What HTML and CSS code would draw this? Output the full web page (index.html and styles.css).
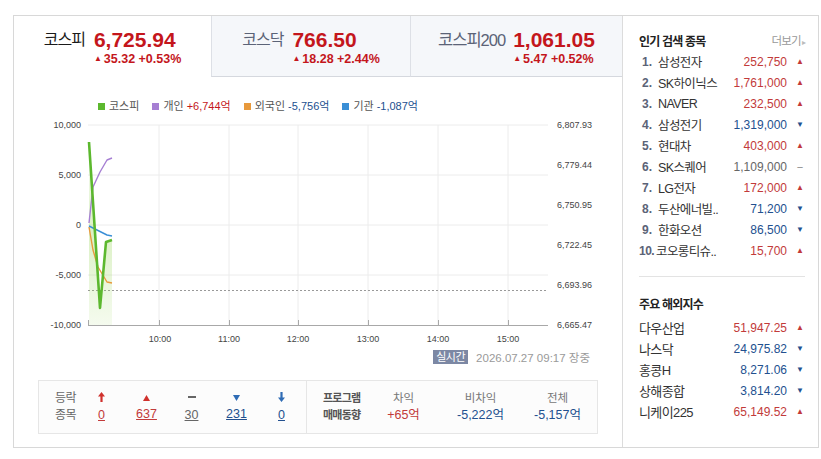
FILE: index.html
```html
<!DOCTYPE html>
<html lang="ko">
<head>
    <meta charset="UTF-8">
    <title>국내 증시</title>
    <meta name="viewport" content="width=device-width">
    <link rel="stylesheet" href="styles.css">
</head>
<body>
<div class="board">
    <main class="market">
        <ul class="tabs">
            <li class="tab on">
                <span class="name">코스피</span>
                <span class="quote"><strong>6,725.94</strong><em><i>▲</i>35.32 +0.53%</em></span>
            </li>
            <li class="tab">
                <span class="name">코스닥</span>
                <span class="quote"><strong>766.50</strong><em><i>▲</i>18.28 +2.44%</em></span>
            </li>
            <li class="tab">
                <span class="name">코스피200</span>
                <span class="quote"><strong>1,061.05</strong><em><i>▲</i>5.47 +0.52%</em></span>
            </li>
        </ul>

        <ul class="legend">
            <li><b class="dot green"></b>코스피</li>
            <li><b class="dot purple"></b>개인 <span class="up">+6,744억</span></li>
            <li><b class="dot orange"></b>외국인 <span class="down">-5,756억</span></li>
            <li><b class="dot blue"></b>기관 <span class="down">-1,087억</span></li>
        </ul>

        <!-- 투자자별 순매수(왼쪽 축) / 지수(오른쪽 축) -->
        <svg class="chart" width="608" height="230" viewBox="14 115 608 230">
            <defs>
                <linearGradient id="kospiFill" x1="0" y1="0" x2="0" y2="1">
                    <stop offset="0" stop-color="#9ad65a" stop-opacity="0.05"/>
                    <stop offset="0.5" stop-color="#9ad65a" stop-opacity="0.35"/>
                    <stop offset="1" stop-color="#9ad65a" stop-opacity="0.1"/>
                </linearGradient>
            </defs>
            <path class="grid" d="M88 125H548M88 175H548M88 225H548M88 275H548M159 125V325M229 125V325M298 125V325M368 125V325M438 125V325M508 125V325"/>
            <path class="axis" d="M88 325.5H548M88.5 320V325M159.5 320V325M229.5 320V325M298.5 320V325M368.5 320V325M438.5 320V325M508.5 320V325"/>
            <path class="base" d="M88 290.5H548"/>

            <polygon class="area" points="89,142 100,308 106,242 112,240 112,325 89,325"/>
            <polyline class="ln purple" points="89,223 93,187 100,172 107,160 112,158"/>
            <polyline class="ln orange" points="89,227 93,250 98,267 107,282 112,283"/>
            <polyline class="ln blue" points="89,226 97,230 107,235 112,236"/>
            <polyline class="ln green" points="89,142 100,308 106,242 112,240"/>

            <g class="yl">
                <text x="81" y="128">10,000</text>
                <text x="81" y="178">5,000</text>
                <text x="81" y="228">0</text>
                <text x="81" y="278">-5,000</text>
                <text x="81" y="328">-10,000</text>
            </g>
            <g class="yr">
                <text x="557" y="128">6,807.93</text>
                <text x="557" y="168">6,779.44</text>
                <text x="557" y="208">6,750.95</text>
                <text x="557" y="248">6,722.45</text>
                <text x="557" y="288">6,693.96</text>
                <text x="557" y="328">6,665.47</text>
            </g>
            <g class="xl">
                <text x="160" y="342">10:00</text>
                <text x="229" y="342">11:00</text>
                <text x="298" y="342">12:00</text>
                <text x="368" y="342">13:00</text>
                <text x="438" y="342">14:00</text>
                <text x="508" y="342">15:00</text>
            </g>
        </svg>

        <p class="stamp"><span class="live">실시간</span><span>2026.07.27 09:17 장중</span></p>

        <div class="summary">
            <div class="updown">
                <span class="head">등락<br>종목</span>
                <span class="col up">
                    <svg width="7" height="10" viewBox="0 0 7 10"><path d="M3.5 0L7 4.5H4.6V10H2.4V4.5H0Z"/></svg>
                    <a href="#">0</a>
                </span>
                <span class="col up">
                    <svg width="7" height="6" viewBox="0 0 7 6"><path d="M3.5 0L7 6H0Z"/></svg>
                    <a href="#">637</a>
                </span>
                <span class="col flat">
                    <svg width="8" height="2" viewBox="0 0 8 2"><rect width="8" height="2"/></svg>
                    <a href="#">30</a>
                </span>
                <span class="col down">
                    <svg width="7" height="6" viewBox="0 0 7 6"><path d="M0 0H7L3.5 6Z"/></svg>
                    <a href="#">231</a>
                </span>
                <span class="col down">
                    <svg width="7" height="10" viewBox="0 0 7 10"><path d="M2.4 0H4.6V5.5H7L3.5 10L0 5.5H2.4Z"/></svg>
                    <a href="#">0</a>
                </span>
            </div>
            <div class="program">
                <span class="head">프로그램<br>매매동향</span>
                <span class="col">차익<b class="up">+65억</b></span>
                <span class="col">비차익<b class="down">-5,222억</b></span>
                <span class="col">전체<b class="down">-5,157억</b></span>
            </div>
        </div>
    </main>

    <aside class="side">
        <h2>인기 검색 종목 <a href="#" class="more">더보기<i>▸</i></a></h2>
        <ol class="rank">
            <li><span class="no">1.</span><span class="nm">삼성전자</span><span class="pr up">252,750</span><i class="ar up">▲</i></li>
            <li><span class="no">2.</span><span class="nm">SK하이닉스</span><span class="pr up">1,761,000</span><i class="ar up">▲</i></li>
            <li><span class="no">3.</span><span class="nm">NAVER</span><span class="pr up">232,500</span><i class="ar up">▲</i></li>
            <li><span class="no">4.</span><span class="nm">삼성전기</span><span class="pr down">1,319,000</span><i class="ar down">▼</i></li>
            <li><span class="no">5.</span><span class="nm">현대차</span><span class="pr up">403,000</span><i class="ar up">▲</i></li>
            <li><span class="no">6.</span><span class="nm">SK스퀘어</span><span class="pr">1,109,000</span><i class="ar flat">−</i></li>
            <li><span class="no">7.</span><span class="nm">LG전자</span><span class="pr up">172,000</span><i class="ar up">▲</i></li>
            <li><span class="no">8.</span><span class="nm">두산에너빌..</span><span class="pr down">71,200</span><i class="ar down">▼</i></li>
            <li><span class="no">9.</span><span class="nm">한화오션</span><span class="pr down">86,500</span><i class="ar down">▼</i></li>
            <li><span class="no ten">10.</span><span class="nm">코오롱티슈..</span><span class="pr up">15,700</span><i class="ar up">▲</i></li>
        </ol>
        <div class="world">
            <h2>주요 해외지수</h2>
            <ul>
                <li><span class="nm">다우산업</span><span class="pr up">51,947.25</span><i class="ar up">▲</i></li>
                <li><span class="nm">나스닥</span><span class="pr down">24,975.82</span><i class="ar down">▼</i></li>
                <li><span class="nm">홍콩H</span><span class="pr down">8,271.06</span><i class="ar down">▼</i></li>
                <li><span class="nm">상해종합</span><span class="pr down">3,814.20</span><i class="ar down">▼</i></li>
                <li><span class="nm">니케이225</span><span class="pr up">65,149.52</span><i class="ar up">▲</i></li>
            </ul>
        </div>
    </aside>
</div>
</body>
</html>
```

FILE: styles.css
```css
* {
    box-sizing: border-box;
}
body {
    margin: 0;
    background: #fff;
    color: #333;
    font-family: "Liberation Sans", "Noto Sans CJK KR", sans-serif;
}
ul, ol, p, h2 {
    margin: 0;
    padding: 0;
    list-style: none;
}
a {
    color: inherit;
    text-decoration: none;
}
i, em {
    font-style: normal;
}
.up {
    color: #c4161c;
}
.down {
    color: #22508f;
}
.board {
    display: flex;
    width: 806px;
    height: 433px;
    margin: 15px 0 0 13px;
    border: 1px solid #d8d8d8;
}
.market {
    width: 608px;
}

/* 지수 탭 */
.tabs {
    display: flex;
    height: 61px;
}
.tab {
    display: flex;
    justify-content: center;
    align-items: flex-start;
    padding-top: 12px;
    background: #f5f7fa;
    border-left: 1px solid #dde0e6;
    border-bottom: 1px solid #d5d8de;
}
.tab:nth-child(1) {
    width: 197px;
}
.tab:nth-child(2) {
    width: 199px;
}
.tab:nth-child(3) {
    width: 212px;
}
.tab.on {
    background: #fff;
    border: 0;
}
.tab .name {
    margin-right: 9px;
    font-size: 16px;
    line-height: 24px;
    letter-spacing: -1px;
    color: #5b6377;
}
.tab:nth-child(3) .name {
    margin-right: 8px;
    font-size: 16.5px;
}
.tab.on .name {
    color: #1a1a1a;
}
.quote {
    display: flex;
    flex-direction: column;
    color: #c4161c;
}
.quote strong {
    font-size: 21px;
    line-height: 24px;
}
.quote em {
    font-size: 12.5px;
    font-weight: bold;
    line-height: 14px;
}
.quote i {
    margin-right: 2px;
    font-size: 8px;
    vertical-align: 2px;
}

/* 범례 */
.legend {
    display: flex;
    gap: 13px;
    height: 38px;
    padding: 20px 0 0 84px;
    font-size: 11px;
    line-height: 18px;
    color: #555;
}
.legend li {
    display: flex;
    align-items: center;
}
.legend .up,
.legend .down {
    margin-left: 3px;
}
.dot {
    width: 7px;
    height: 7px;
    margin-right: 4px;
}
.dot.green {
    background: #5cb82e;
}
.dot.purple {
    background: #a67fd3;
}
.dot.orange {
    background: #e8993c;
}
.dot.blue {
    background: #3a8fd6;
}

/* 차트 */
.chart {
    display: block;
}
.chart .grid {
    stroke: #ececec;
    stroke-width: 1;
    fill: none;
}
.chart .axis {
    stroke: #a8a8a8;
    stroke-width: 1;
    fill: none;
}
.chart .base {
    stroke: #999;
    stroke-width: 1;
    stroke-dasharray: 2 2;
}
.chart .area {
    fill: url(#kospiFill);
}
.chart .ln {
    fill: none;
    stroke-width: 1.4;
    stroke-linejoin: round;
}
.chart .ln.green {
    stroke: #5cb82e;
    stroke-width: 2.6;
}
.chart .ln.purple {
    stroke: #a67fd3;
}
.chart .ln.orange {
    stroke: #e8993c;
}
.chart .ln.blue {
    stroke: #3a8fd6;
}
.chart text {
    font-family: "Liberation Sans", sans-serif;
    font-size: 9px;
    fill: #444;
}
.chart .yl text {
    text-anchor: end;
}
.chart .xl text {
    text-anchor: middle;
}

.stamp {
    display: flex;
    justify-content: flex-end;
    align-items: center;
    gap: 8px;
    height: 20px;
    margin-top: 2px;
    padding-right: 32px;
    font-size: 11.5px;
    color: #9a9a9a;
}
.live {
    height: 14px;
    padding: 0 3px;
    background: #7c88a4;
    color: #fff;
    font-size: 11px;
    line-height: 14px;
    letter-spacing: -0.5px;
}

/* 등락종목 / 프로그램 매매 */
.summary {
    display: flex;
    height: 54px;
    margin: 13px 24px 0;
    border: 1px solid #e6e6e6;
    background: #fcfcfc;
    font-size: 12px;
}
.summary .head {
    line-height: 17px;
    color: #666;
    letter-spacing: -0.5px;
}
.updown {
    display: flex;
    align-items: center;
    width: 268px;
    padding-left: 16px;
    border-right: 1px solid #e6e6e6;
}
.updown .head {
    width: 24px;
}
.updown .col {
    display: flex;
    flex-direction: column;
    align-items: center;
    width: 45px;
}
.updown svg {
    display: block;
    margin: 4px 0 5px;
    fill: currentColor;
}
.updown .col:nth-child(2) svg,
.updown .col:nth-child(6) svg {
    margin: 2px 0 5px;
}
.updown .col:nth-child(4) svg {
    margin: 6px 0 9px;
}
.updown a {
    line-height: 17px;
    font-size: 12.5px;
    text-decoration: underline;
}
.updown .up {
    color: #d0312d;
}
.updown .up a {
    color: #c23a3a;
}
.updown .flat {
    color: #666;
}
.updown .down {
    color: #2f6cb5;
}
.updown .down a {
    color: #22508f;
}
.program {
    display: flex;
    align-items: center;
    padding-left: 16px;
}
.program .head {
    width: 42px;
    font-size: 11px;
    font-weight: bold;
    color: #555;
    letter-spacing: -0.8px;
}
.program .col {
    display: flex;
    flex-direction: column;
    align-items: center;
    width: 77px;
    font-size: 11.5px;
    line-height: 17px;
    color: #777;
}
.program b {
    font-weight: normal;
    font-size: 12.5px;
}
.program .up {
    color: #c23a3a;
}

/* 사이드 */
.side {
    flex: 1;
    padding: 14px 13px 0 16px;
    border-left: 1px solid #dcdcdc;
}
.side h2 {
    display: flex;
    justify-content: space-between;
    align-items: center;
    height: 20px;
    margin-bottom: 1px;
    font-size: 12px;
    letter-spacing: -0.8px;
    color: #222;
}
.more {
    font-weight: normal;
    font-size: 11.5px;
    color: #999;
}
.more i {
    margin-left: 1px;
    font-size: 8px;
    color: #bbb;
}
.side li {
    display: flex;
    align-items: center;
    height: 21px;
}
.rank {
    padding-bottom: 15px;
    border-bottom: 1px solid #e3e3e3;
}
.no {
    width: 19px;
    padding-left: 3px;
    font-size: 12px;
    font-weight: bold;
    color: #5b6377;
}
.no.ten {
    padding-left: 0;
    width: 17px;
    letter-spacing: -0.5px;
}
.nm {
    flex: 1;
    font-size: 12.5px;
    letter-spacing: -0.6px;
    color: #333;
}
.pr {
    font-size: 12px;
    color: #666;
}
.side .up {
    color: #c23a3a;
}
.side .down {
    color: #22508f;
}
.ar {
    width: 8px;
    margin: 0 1px 0 9px;
    font-size: 8px;
    text-align: center;
}
.ar.flat {
    color: #888;
    font-size: 11px;
}
.world {
    padding-top: 16px;
}
.world h2 {
    margin-bottom: 4px;
}
.world .nm {
    font-size: 13px;
}
```
